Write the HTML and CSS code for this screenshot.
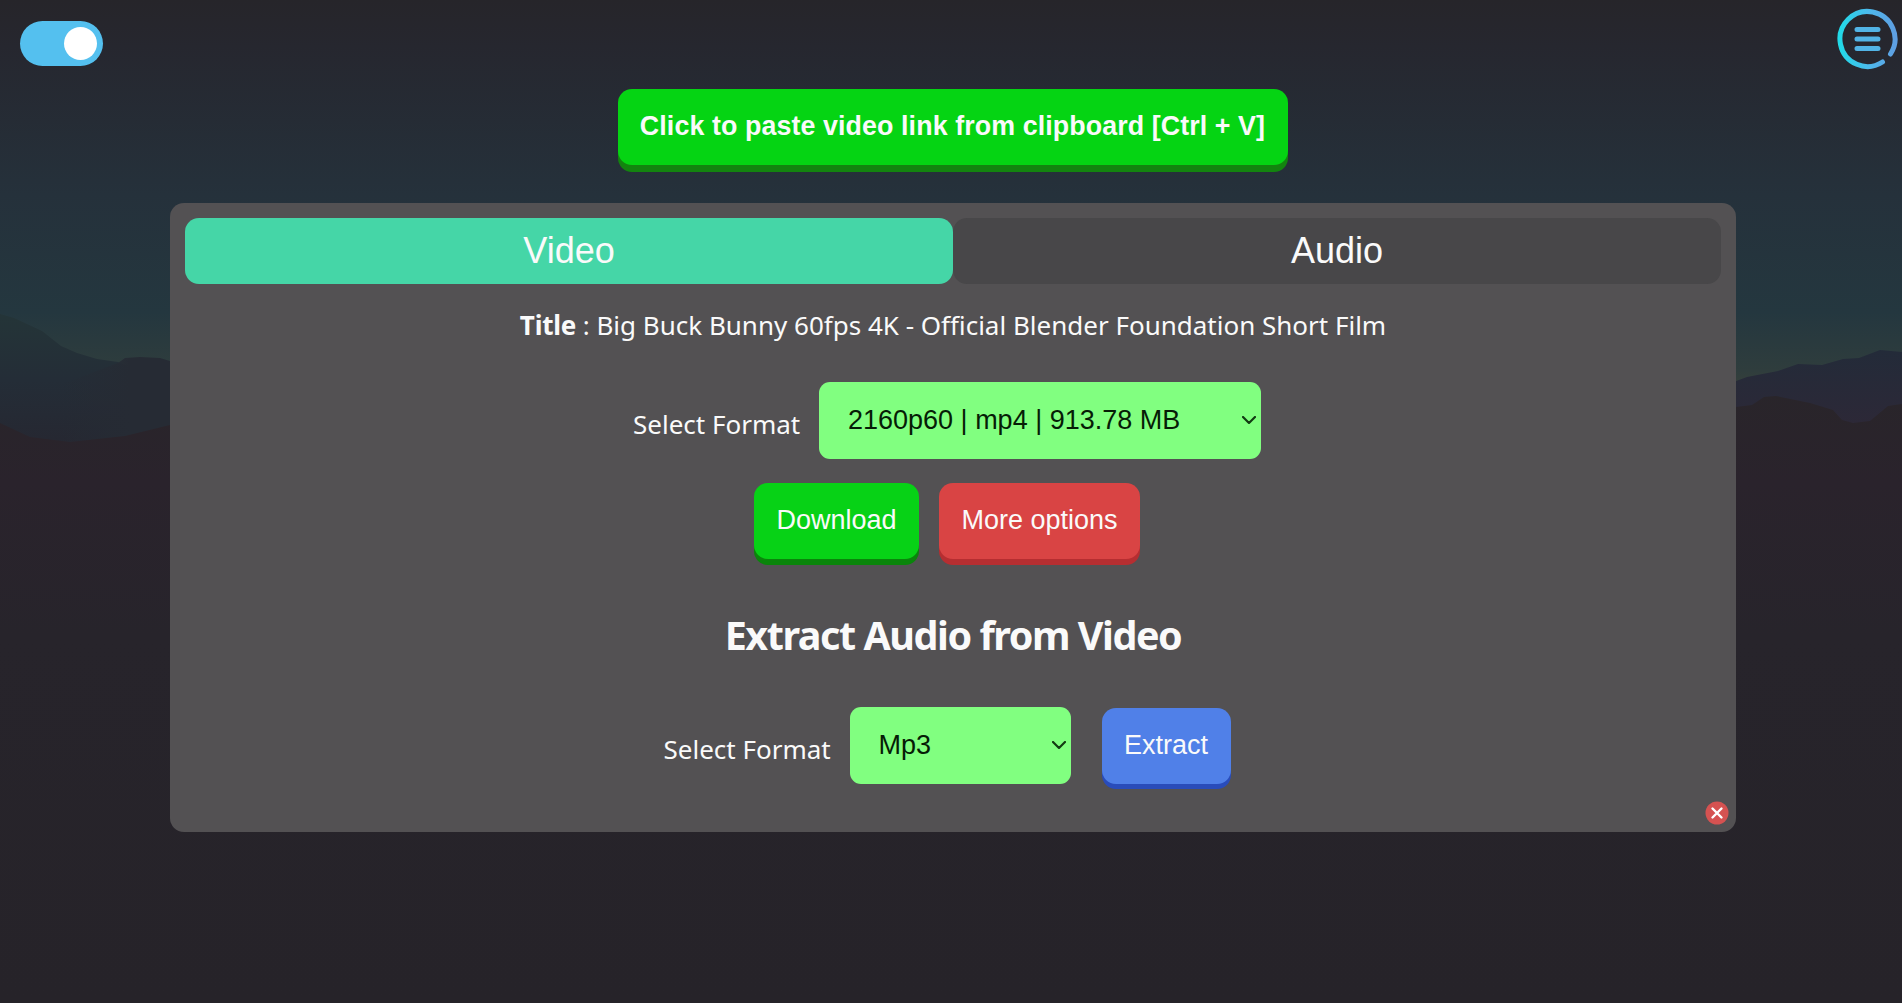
FILE: index.html
```html
<!DOCTYPE html>
<html lang="en">
<head>
<meta charset="utf-8">
<title>Video downloader</title>
<link rel="stylesheet" href="styles.css">
</head>
<body>
<svg class="scenery" viewBox="0 0 1902 1003" preserveAspectRatio="none" aria-hidden="true">
  <defs>
    <linearGradient id="sky" x1="0" y1="0" x2="0" y2="390" gradientUnits="userSpaceOnUse">
      <stop offset="0" stop-color="#26252a"/><stop offset=".12" stop-color="#26272f"/><stop offset=".5" stop-color="#25313b"/><stop offset=".8" stop-color="#24373f"/><stop offset=".95" stop-color="#2f3d3d"/><stop offset="1" stop-color="#38403a"/>
    </linearGradient>
    <linearGradient id="hillL" x1="0" y1="310" x2="0" y2="450" gradientUnits="userSpaceOnUse">
      <stop offset="0" stop-color="#243538"/><stop offset=".5" stop-color="#242d37"/><stop offset="1" stop-color="#262731"/>
    </linearGradient>
    <linearGradient id="ridge" x1="60" y1="0" x2="130" y2="0" gradientUnits="userSpaceOnUse">
      <stop offset="0" stop-color="#262b34" stop-opacity="0"/><stop offset="1" stop-color="#262b34"/>
    </linearGradient>
    <linearGradient id="hillR" x1="0" y1="350" x2="0" y2="430" gradientUnits="userSpaceOnUse">
      <stop offset="0" stop-color="#232b39"/><stop offset="1" stop-color="#2d2837"/>
    </linearGradient>
    <linearGradient id="ground" x1="0" y1="390" x2="0" y2="1003" gradientUnits="userSpaceOnUse">
      <stop offset="0" stop-color="#29252a"/><stop offset=".15" stop-color="#2a232c"/><stop offset=".4" stop-color="#27242b"/><stop offset="1" stop-color="#262329"/>
    </linearGradient>
  </defs>
  <path fill="url(#sky)" d="M0 0h1902v500H0z"/>
  <path fill="url(#hillL)" d="M0 314 14 318 42 331 61 346 77 353 97 359 118 362 170 385V470H0z"/>
  <path fill="url(#ridge)" d="M60 385 118 363 125 358 140 357 160 358 180 364V470H60z"/>
  <path fill="url(#hillR)" d="M1720 387 1747 377 1778 371 1798 364 1822 365 1843 359 1859 358 1880 350 1902 352V470H1720z"/>
  <path fill="url(#ground)" d="M0 423 30 437 70 442 125 436 170 425 400 460 1600 440 1736 407 1752 405 1764 397 1776 396 1810 403 1833 410 1842 420 1853 423 1870 421 1888 406 1902 404V1003H0z"/>
</svg>
<main class="page">
  <header class="topbar">
    <button class="toggle" aria-label="Theme"><span class="knob"></span></button>
    <svg class="menu" viewBox="0 0 62 62" fill="none" role="img" aria-label="Menu">
      <defs><linearGradient id="mg"><stop stop-color="#22d9e8"/><stop offset=".55" stop-color="#4eb8ec"/><stop offset="1" stop-color="#5e9fe2"/></linearGradient></defs>
      <path stroke="url(#mg)" stroke-width="5" stroke-linecap="round" d="M46.5 54A27.5 27.5 0 1 1 54.5 46"/>
      <path stroke="#52b4e6" stroke-width="5" stroke-linecap="round" d="M21 21.500h21M21 31h21M21 40.500h21"/>
    </svg>
  </header>
  <button class="btn paste"><span>Click to paste video link from clipboard [Ctrl + V]</span></button>
  <section class="panel">
    <nav class="tabs">
      <button class="tab active">Video</button><button class="tab">Audio</button>
    </nav>
    <p class="title"><b>Title </b><span>: Big Buck Bunny 60fps 4K - Official Blender Foundation Short Film</span></p>
    <div class="row formats">
      <span class="label">Select Format</span>
      <div class="select wide"><span>2160p60 | mp4 | 913.78 MB</span><svg viewBox="0 0 14 8"><path d="M1 1 7 7 13 1"/></svg></div>
    </div>
    <div class="row actions">
      <button class="btn download">Download</button>
      <button class="btn more">More options</button>
    </div>
    <h2>Extract Audio from Video</h2>
    <div class="row extraction">
      <span class="label">Select Format</span>
      <div class="select small"><span>Mp3</span><svg viewBox="0 0 14 8"><path d="M1 1 7 7 13 1"/></svg></div>
      <button class="btn extract">Extract</button>
    </div>
    <svg class="close" viewBox="0 0 24 24" role="img" aria-label="Close"><circle cx="12" cy="12" r="11.500" fill="#d55251"/><path d="M7.500 7.500l9 9m0-9l-9 9" stroke="#fff" stroke-width="2.400" stroke-linecap="round"/></svg>
  </section>
</main>
</body>
</html>
```
FILE: styles.css
```css
* { box-sizing: border-box; }
html { background: #fff; }
body { margin: 0; height: 1004px; overflow: hidden; color: #fafafa; font-family: "Noto Sans", sans-serif; }
button { border: 0; padding: 0; font-family: "Liberation Sans", sans-serif; color: inherit; }
.scenery { position: absolute; left: 0; top: 0; width: 1902px; height: 1003px; z-index: -1; }
.page { display: flex; flex-direction: column; align-items: center; width: 1902px; }
.topbar { display: flex; justify-content: space-between; align-items: flex-start; width: 100%; height: 89px; padding: 8px 4px 0 20px; }
.toggle { display: flex; justify-content: flex-end; align-items: center; width: 83px; height: 45px; margin-top: 13px; padding-right: 6px; border-radius: 23px; background: #54c0ef; }
.knob { width: 33px; height: 33px; border-radius: 50%; background: #fff; }
.menu { width: 62px; height: 62px; }
.btn { height: 76px; padding-bottom: 2px; border-radius: 14px; font-size: 27px; white-space: nowrap; text-align: center; }
.paste { width: 670px; margin-left: 3px; background: #05d413; box-shadow: 0 7px #13840f; font-size: 26.8px; font-weight: bold; letter-spacing: 0.1px; }
.panel { position: relative; display: flex; flex-direction: column; align-items: center; width: 1566px; height: 629px; margin: 38px 0 0 4px; padding: 15px; border-radius: 14px; background: #535153; }
.tabs { display: flex; width: 100%; height: 66px; }
.tab { flex: 1; padding-bottom: 1px; border-radius: 14px; background: #484749; font-size: 36px; }
.tab.active { background: #45d6a7; }
.title { margin: 21px 0 0; height: 40px; line-height: 40px; font-size: 26px; white-space: nowrap; }
.title b { letter-spacing: -0.2px; }
.row { display: flex; align-items: flex-start; }
.formats { margin: 37px 0 0 -12px; }
.label { width: 168px; height: 40px; margin-top: 22px; line-height: 40px; font-size: 26px; white-space: nowrap; }
.select { display: flex; align-items: center; justify-content: space-between; height: 77px; padding: 0 5px 1px 29px; border-radius: 11px; background: #81ff80; color: #061d06; font-family: "Liberation Sans", sans-serif; font-size: 27px; white-space: nowrap; }
.select svg { width: 14px; height: 8px; fill: none; stroke: #123b12; stroke-width: 2.2; stroke-linecap: round; stroke-linejoin: round; }
.wide { width: 442px; margin-left: 18px; }
.actions { gap: 20px; margin: 24px 0 0 -12px; }
.download { width: 165px; background: #07d216; box-shadow: 0 6px #0a850b; }
.more { width: 201px; background: #d94444; box-shadow: 0 6px #b62e31; }
h2 { height: 56px; margin: 48px 0 0; line-height: 56px; font-size: 39.5px; font-weight: bold; letter-spacing: -1.45px; white-space: nowrap; }
.extraction { margin: 44px 0 0 -12px; }
.small { width: 221px; margin-left: 18px; }
.extract { width: 129px; margin: 1px 0 0 31px; background: #5080e8; box-shadow: 0 5px #294cba; }
.close { position: absolute; right: 7px; bottom: 7px; width: 24px; height: 24px; }
```
